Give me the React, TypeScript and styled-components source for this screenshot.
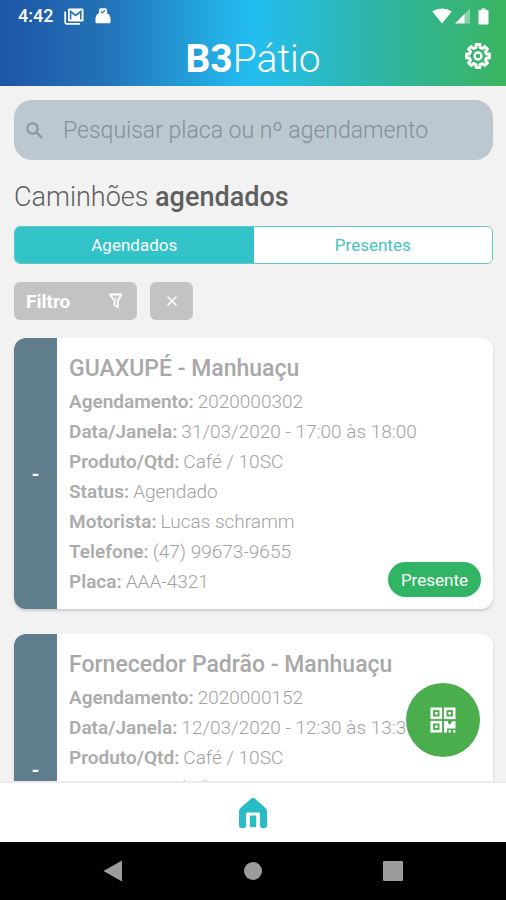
import React from "react";
import styled, { createGlobalStyle } from "styled-components";

const GlobalStyle = createGlobalStyle`
  *, *::before, *::after { box-sizing: border-box; }
  html, body { margin: 0; padding: 0; }
  body {
    background: #f2f2f2;
    font-family: Roboto, "Open Sans", sans-serif;
    color: #6a6a6a;
  }
  button, input { font-family: inherit; margin: 0; }
  button { cursor: pointer; }
  svg { display: block; }
`;

const Screen = styled.div`
  display: flex;
  flex-direction: column;
  height: 100vh;
  overflow: hidden;
`;

const Header = styled.header`
  flex: none;
  background: linear-gradient(90deg, #1d55a5 0%, #2371b7 20%, #23bef0 50%, #2fb5a5 75%, #3bb45f 100%);
  color: #fff;
`;

const StatusBar = styled.div`
  display: flex;
  align-items: center;
  justify-content: space-between;
  height: 32px;
  padding: 0 17px 0 18px;
`;

const StatusGroup = styled.div<{ $gap: number }>`
  display: flex;
  align-items: center;
  gap: ${(p) => p.$gap}px;
`;

const Clock = styled.span`
  font-size: 18px;
  font-weight: 500;
  line-height: 20px;
`;

const TitleBar = styled.div`
  display: grid;
  grid-template-columns: 1fr auto 1fr;
  align-items: center;
  height: 54px;
  padding: 0 14px;
`;

const AppTitle = styled.h1`
  grid-column: 2;
  margin: 0;
  font-size: 39px;
  line-height: 48px;
  font-weight: 300;

  b { font-weight: 700; }
`;

const IconButton = styled.button`
  align-self: start;
  justify-self: end;
  padding: 10px 0;
  border: 0;
  background: none;
  color: inherit;
`;

const Content = styled.div`
  position: relative;
  flex: 1;
  min-height: 0;
`;

const Scroller = styled.main`
  display: flex;
  flex-direction: column;
  height: 100%;
  padding: 14px 13px 0 14px;
  overflow: hidden;
`;

const SearchBox = styled.label`
  flex: none;
  display: flex;
  align-items: center;
  gap: 20px;
  height: 60px;
  padding: 0 12px;
  border-radius: 18px;
  background: #bcc7d0;
  color: #8795a1;
`;

const SearchInput = styled.input`
  flex: 1;
  min-width: 0;
  padding: 2px 0 0;
  border: 0;
  outline: 0;
  background: none;
  font-size: 23px;
  font-weight: 300;
  line-height: 30px;
  color: #6d7c88;

  &::placeholder { color: #82909c; opacity: 1; }
`;

const SectionTitle = styled.h2`
  flex: none;
  margin: 20px 0 12px;
  font-size: 27px;
  font-weight: 300;
  line-height: 34px;
  color: #5f5f5f;

  b { font-weight: 500; }
`;

const Segments = styled.div`
  flex: none;
  display: grid;
  grid-template-columns: 1fr 1fr;
  height: 38px;
  border: 1px solid #62c6ca;
  border-radius: 6px;
  overflow: hidden;
`;

const Segment = styled.button<{ $active?: boolean }>`
  padding: 0;
  border: 0;
  background: ${(p) => (p.$active ? "#31c3c7" : "#fff")};
  color: ${(p) => (p.$active ? "#fff" : "#45c2c6")};
  font-size: 17px;
  font-weight: 400;
`;

const FilterRow = styled.div`
  flex: none;
  display: flex;
  gap: 13px;
  margin: 18px 0;
`;

const FilterButton = styled.button<{ $width: number }>`
  display: flex;
  align-items: center;
  justify-content: ${(p) => (p.$width > 60 ? "space-between" : "center")};
  width: ${(p) => p.$width}px;
  height: 38px;
  padding: 0 12px;
  border: 0;
  border-radius: 6px;
  background: #c3c3c3;
  color: #fff;
  font-size: 19px;
  font-weight: 700;
`;

const CardList = styled.ul`
  display: flex;
  flex-direction: column;
  gap: 25px;
  margin: 0;
  padding: 0;
  list-style: none;
`;

const Card = styled.li`
  position: relative;
  flex: none;
  display: flex;
  border-radius: 12px;
  background: #fff;
  box-shadow: 0 2px 3px rgba(0, 0, 0, 0.16);
`;

const Stripe = styled.div`
  flex: none;
  display: flex;
  align-items: center;
  justify-content: center;
  width: 43px;
  border-radius: 12px 0 0 12px;
  background: #5f7d8c;
  color: #fff;
  font-size: 20px;
  font-weight: 700;
`;

const CardBody = styled.div`
  flex: 1;
  min-width: 0;
  padding: 16px 12px 12px;
`;

const CardTitle = styled.h3`
  margin: 0 0 3px;
  font-size: 23px;
  font-weight: 500;
  line-height: 30px;
  color: #a8a8a8;
`;

const Fields = styled.dl`
  margin: 0;
`;

const Field = styled.div`
  display: flex;
  gap: 4px;
  font-size: 19px;
  line-height: 30px;
  white-space: nowrap;

  dt {
    font-weight: 600;
    color: #acacac;
  }

  dd {
    margin: 0;
    font-weight: 300;
    color: #a2a2a2;
  }
`;

const PresentButton = styled.button`
  position: absolute;
  right: 12px;
  bottom: 12px;
  height: 35px;
  padding: 0 13px;
  border: 0;
  border-radius: 18px;
  background: #31b565;
  color: #fff;
  font-size: 17px;
  font-weight: 400;
`;

const ScanButton = styled.button`
  position: absolute;
  right: 26px;
  bottom: 24px;
  display: flex;
  align-items: center;
  justify-content: center;
  width: 74px;
  height: 74px;
  padding: 0;
  border: 0;
  border-radius: 50%;
  background: #4aae4f;
  color: #fff;
`;

const TabBar = styled.nav`
  flex: none;
  display: flex;
  align-items: center;
  justify-content: center;
  height: 61px;
  border-top: 2px solid #ececec;
  background: #fff;

  a { color: #29bcc4; }
`;

const SystemBar = styled.div`
  flex: none;
  display: grid;
  grid-template-columns: repeat(3, 140px);
  justify-content: center;
  justify-items: center;
  align-items: center;
  height: 58px;
  background: #000;
  color: #9c9c9c;

  button {
    padding: 0;
    border: 0;
    background: none;
    color: inherit;
  }
`;

const MailIcon = () => (
  <svg width="20" height="17" viewBox="0 0 20 17" fill="none">
    <path d="M1.2 3.5V14.3Q1.2 15.8 2.7 15.8H16" stroke="#fff" strokeWidth="1.8" />
    <rect x="4" y="0.5" width="15.5" height="13" rx="1.2" fill="#fff" />
    <path d="M6.6 11.5V3.5L11.7 7.5L16.8 3.5V11.5" stroke="#2377b8" strokeWidth="1.6" />
  </svg>
);

const BagIcon = () => (
  <svg width="16" height="16" viewBox="0 0 16 16">
    <path fill="#fff" d="M4.300 1.200Q4.500.300 5.400.300H10.600Q11.500.300 11.700 1.200L12.500 6H13.200Q14.200 6 14.400 7L15.500 10V14.300Q15.500 15.300 14.500 15.300H1.500Q.500 15.300.500 14.300V10L1.600 7Q1.800 6 2.800 6H3.500Z" />
    <path d="M6 3.500L7.500 4.900L10 2.200" stroke="#2580be" strokeWidth="1.200" fill="none" />
  </svg>
);

const WifiIcon = () => (
  <svg width="20" height="16" viewBox="0 0 20 16">
    <path fill="#fff" d="M10 15.500L.3 3.500Q4.500.5 10 .5T19.700 3.500Z" />
  </svg>
);

const SignalIcon = () => (
  <svg width="16" height="16" viewBox="0 0 16 16">
    <path fill="#fff" opacity="0.4" d="M15 0.500V15.500H9V6.500Z" />
    <path fill="#fff" d="M9.500 6V15.500H0Z" />
  </svg>
);

const BatteryIcon = () => (
  <svg width="11" height="17" viewBox="0 0 11 17">
    <path fill="#fff" d="M3.500.5H7.500V2H9.500Q10.500 2 10.500 3V15.500Q10.500 16.500 9.500 16.500H1.500Q.5 16.500.5 15.500V3Q.5 2 1.500 2H3.500Z" />
  </svg>
);

const gearPath = (() => {
  const points: string[] = [];
  for (let i = 0; i < 8; i++) {
    const base = i * 45 - 90;
    [[-13, 8.7], [-10, 11.7], [10, 11.7], [13, 8.7]].forEach(([offset, radius]) => {
      const angle = ((base + offset) * Math.PI) / 180;
      points.push(`${(14 + radius * Math.cos(angle)).toFixed(2)} ${(14 + radius * Math.sin(angle)).toFixed(2)}`);
    });
  }
  return `M${points.join("L")}Z`;
})();

const GearIcon = () => (
  <svg width="28" height="28" viewBox="0 0 28 28" fill="none" stroke="#fff" strokeLinejoin="round">
    <path d={gearPath} strokeWidth="2.8" />
    <circle cx="14" cy="14" r="3.5" strokeWidth="2.4" />
  </svg>
);

const SearchIcon = () => (
  <svg width="17" height="17" viewBox="0 0 17 17" fill="none" stroke="currentColor" strokeWidth="2">
    <circle cx="6.500" cy="6.500" r="5.200" />
    <path d="M10.500 10.500L16 16" strokeWidth="2.300" />
  </svg>
);

const FunnelIcon = () => (
  <svg width="18" height="16" viewBox="0 0 18 16" fill="none" stroke="#fff" strokeWidth="1.800" strokeLinejoin="round">
    <path d="M3 1.500H14.500L10.800 8V14L7.500 12V8Z" />
    <path d="M8.800 4V8" strokeWidth="1" />
  </svg>
);

const CloseIcon = () => (
  <svg width="12" height="12" viewBox="0 0 12 12" stroke="#fff" strokeWidth="1.500">
    <path d="M1.500 1.500L10.500 10.500M10.500 1.500L1.500 10.500" />
  </svg>
);

const QrIcon = () => (
  <svg width="26" height="26" viewBox="0 0 26 26">
    <g fill="none" stroke="#fff" strokeWidth="2.600">
      <rect x="1.800" y="1.800" width="9" height="9" />
      <rect x="15.200" y="1.800" width="9" height="9" />
      <rect x="1.800" y="15.200" width="9" height="9" />
    </g>
    <g fill="#fff">
      <rect x="5" y="5" width="2.600" height="2.600" />
      <rect x="18.400" y="5" width="2.600" height="2.600" />
      <rect x="5" y="18.400" width="2.600" height="2.600" />
      <path d="M14 14H18V16L20 18L22.500 14H25.500V21.500H17V25.500H14Z" />
      <rect x="18.600" y="23.200" width="2.400" height="2.400" />
      <rect x="23" y="23.200" width="2.400" height="2.400" />
    </g>
  </svg>
);

const HomeIcon = () => (
  <svg width="28" height="32" viewBox="0 0 28 32" fill="currentColor">
    <path d="M12.600 1.300Q14 0 15.400 1.300L26.300 10.700Q28 12.200 28 14.200V28.500Q28 31 25.500 31H23Q21 31 21 29V17Q21 15.500 19.500 15.500H8.500Q7 15.500 7 17V29Q7 31 5 31H2.500Q0 31 0 28.500V14.200Q0 12.200 1.700 10.700Z" />
    <path d="M10.800 18.500H17.200V30H10.800Z" />
  </svg>
);

type Booking = {
  title: string;
  fields: [string, string][];
  present: boolean;
};

const bookings: Booking[] = [
  {
    title: "GUAXUPÉ - Manhuaçu",
    fields: [
      ["Agendamento:", "2020000302"],
      ["Data/Janela:", "31/03/2020 - 17:00 às 18:00"],
      ["Produto/Qtd:", "Café / 10SC"],
      ["Status:", "Agendado"],
      ["Motorista:", "Lucas schramm"],
      ["Telefone:", "(47) 99673-9655"],
      ["Placa:", "AAA-4321"],
    ],
    present: true,
  },
  {
    title: "Fornecedor Padrão - Manhuaçu",
    fields: [
      ["Agendamento:", "2020000152"],
      ["Data/Janela:", "12/03/2020 - 12:30 às 13:30"],
      ["Produto/Qtd:", "Café / 10SC"],
      ["Status:", "Agendado"],
      ["Motorista:", ""],
      ["Telefone:", ""],
      ["Placa:", ""],
    ],
    present: false,
  },
];

const BookingCard = ({ title, fields, present }: Booking) => (
  <Card>
    <Stripe>-</Stripe>
    <CardBody>
      <CardTitle>{title}</CardTitle>
      <Fields>
        {fields.map(([label, value]) => (
          <Field key={label}>
            <dt>{label}</dt>
            <dd>{value}</dd>
          </Field>
        ))}
      </Fields>
    </CardBody>
    {present && <PresentButton>Presente</PresentButton>}
  </Card>
);

export default function App() {
  return (
    <>
      <GlobalStyle />
      <Screen>
        <Header>
          <StatusBar>
            <StatusGroup $gap={11}>
              <Clock>4:42</Clock>
              <MailIcon />
              <BagIcon />
            </StatusGroup>
            <StatusGroup $gap={7}>
              <StatusGroup $gap={3}>
                <WifiIcon />
                <SignalIcon />
              </StatusGroup>
              <BatteryIcon />
            </StatusGroup>
          </StatusBar>
          <TitleBar>
            <AppTitle><b>B3</b>Pátio</AppTitle>
            <IconButton aria-label="Configurações"><GearIcon /></IconButton>
          </TitleBar>
        </Header>

        <Content>
          <Scroller>
            <SearchBox>
              <SearchIcon />
              <SearchInput type="text" aria-label="Pesquisar" placeholder="Pesquisar placa ou nº agendamento" />
            </SearchBox>
            <SectionTitle>Caminhões <b>agendados</b></SectionTitle>
            <Segments>
              <Segment $active aria-pressed="true">Agendados</Segment>
              <Segment aria-pressed="false">Presentes</Segment>
            </Segments>
            <FilterRow>
              <FilterButton $width={123}>Filtro <FunnelIcon /></FilterButton>
              <FilterButton $width={43} aria-label="Limpar filtro"><CloseIcon /></FilterButton>
            </FilterRow>
            <CardList>
              {bookings.map((booking) => (
                <BookingCard key={booking.title} {...booking} />
              ))}
            </CardList>
          </Scroller>
          <ScanButton aria-label="Ler QR code"><QrIcon /></ScanButton>
        </Content>

        <TabBar>
          <a href="#inicio" aria-label="Início"><HomeIcon /></a>
        </TabBar>
        <SystemBar>
          <button aria-label="Voltar">
            <svg width="20" height="22" viewBox="0 0 20 22"><path fill="currentColor" d="M19 .5V21.500L.5 11Z" /></svg>
          </button>
          <button aria-label="Tela inicial">
            <svg width="18" height="18" viewBox="0 0 18 18"><circle cx="9" cy="9" r="9" fill="currentColor" /></svg>
          </button>
          <button aria-label="Recentes">
            <svg width="20" height="20" viewBox="0 0 20 20"><rect width="20" height="20" rx="1" fill="currentColor" /></svg>
          </button>
        </SystemBar>
      </Screen>
    </>
  );
}
